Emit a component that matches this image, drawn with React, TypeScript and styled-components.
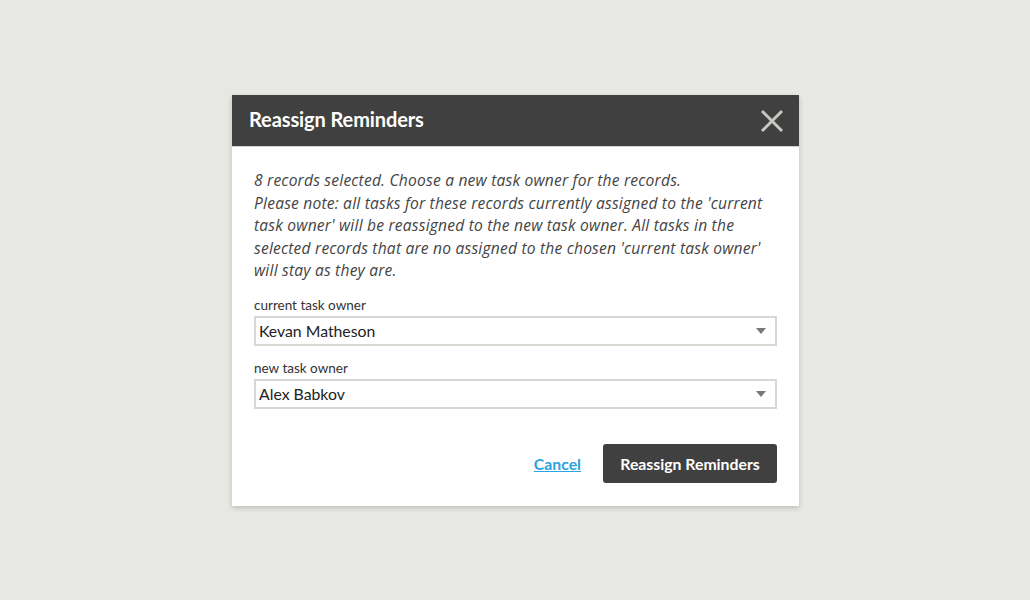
import React from "react";
import styled, { createGlobalStyle } from "styled-components";

const Global = createGlobalStyle`
  html, body { margin: 0; padding: 0; }
  body {
    background: #e7e7e3;
    font-family: "Lato", "Open Sans", sans-serif;
    width: 1030px;
    height: 600px;
    overflow: hidden;
  }
`;

const Page = styled.div`
  width: 1030px;
  height: 600px;
  display: flex;
  justify-content: center;
  padding-top: 95px;
  box-sizing: border-box;
`;

const Dialog = styled.div`
  width: 567px;
  height: 411px;
  margin-left: 1px;
  background: #ffffff;
  box-shadow: 0 2px 5px rgba(0, 0, 0, 0.18);
  display: flex;
  flex-direction: column;
`;

const Header = styled.div`
  height: 52px;
  box-sizing: border-box;
  background: #404040;
  display: flex;
  align-items: center;
  justify-content: space-between;
  padding: 0 14px 3px 17px;
  border-bottom: 1px solid #d0d0d0;
`;

const Title = styled.h2`
  margin: 0;
  color: #ffffff;
  font-family: "Lato", sans-serif;
  font-weight: 700;
  font-size: 20px;
  letter-spacing: -0.1px;
`;

const CloseButton = styled.button`
  width: 26px;
  height: 26px;
  padding: 0;
  margin-top: 3px;
  border: none;
  background: transparent;
  display: flex;
  align-items: center;
  justify-content: center;
  cursor: pointer;
`;

const Body = styled.div`
  padding: 22px 22px 0 22px;
  display: flex;
  flex-direction: column;
`;

const Message = styled.p`
  margin: 0;
  font-family: "Open Sans", sans-serif;
  font-style: italic;
  font-size: 15.6px;
  letter-spacing: 0.2px;
  line-height: 22.6px;
  color: #444444;
  white-space: nowrap;
`;

const Field = styled.div<{ $top: number }>`
  margin-top: ${(p) => p.$top}px;
  display: flex;
  flex-direction: column;
`;

const Label = styled.label`
  font-family: "Lato", sans-serif;
  font-size: 13.5px;
  color: #333333;
  line-height: 16px;
  margin-bottom: 3px;
`;

const SelectBox = styled.div`
  height: 30px;
  box-sizing: border-box;
  border: 2px solid #d8d8d3;
  display: flex;
  align-items: center;
  justify-content: space-between;
  padding: 0 9px 0 3px;
  font-family: "Lato", sans-serif;
  font-size: 15.8px;
  color: #222222;
`;

const Arrow = styled.span`
  width: 0;
  height: 0;
  border-left: 5px solid transparent;
  border-right: 5px solid transparent;
  border-top: 6px solid #777777;
`;

const Footer = styled.div`
  margin-top: 35px;
  display: flex;
  justify-content: flex-end;
  align-items: center;
  gap: 22px;
`;

const CancelLink = styled.a`
  font-family: "Lato", sans-serif;
  font-weight: 700;
  font-size: 15.8px;
  color: #2ba3dc;
  text-decoration: underline;
  cursor: pointer;
`;

const PrimaryButton = styled.button`
  height: 39px;
  width: 174px;
  border: none;
  border-radius: 3px;
  background: #404040;
  color: #ffffff;
  font-family: "Lato", sans-serif;
  font-weight: 700;
  font-size: 15.8px;
  cursor: pointer;
`;

const Select = ({ value }: { value: string }) => (
  <SelectBox>
    <span>{value}</span>
    <Arrow />
  </SelectBox>
);

export default function App() {
  return (
    <>
      <Global />
      <Page>
        <Dialog>
          <Header>
            <Title>Reassign Reminders</Title>
            <CloseButton aria-label="Close">
              <svg width="24" height="24" viewBox="0 0 24 24">
                <path
                  d="M2 2 L22 22 M22 2 L2 22"
                  stroke="#c9c7c1"
                  strokeWidth="3"
                  strokeLinecap="butt"
                />
              </svg>
            </CloseButton>
          </Header>
          <Body>
            <Message>
              8 records selected. Choose a new task owner for the records.
              <br />
              Please note: all tasks for these records currently assigned to the 'current
              <br />
              task owner' will be reassigned to the new task owner. All tasks in the
              <br />
              selected records that are no assigned to the chosen 'current task owner'
              <br />
              will stay as they are.
            </Message>
            <Field $top={15}>
              <Label>current task owner</Label>
              <Select value="Kevan Matheson" />
            </Field>
            <Field $top={14}>
              <Label>new task owner</Label>
              <Select value="Alex Babkov" />
            </Field>
            <Footer>
              <CancelLink>Cancel</CancelLink>
              <PrimaryButton>Reassign Reminders</PrimaryButton>
            </Footer>
          </Body>
        </Dialog>
      </Page>
    </>
  );
}
